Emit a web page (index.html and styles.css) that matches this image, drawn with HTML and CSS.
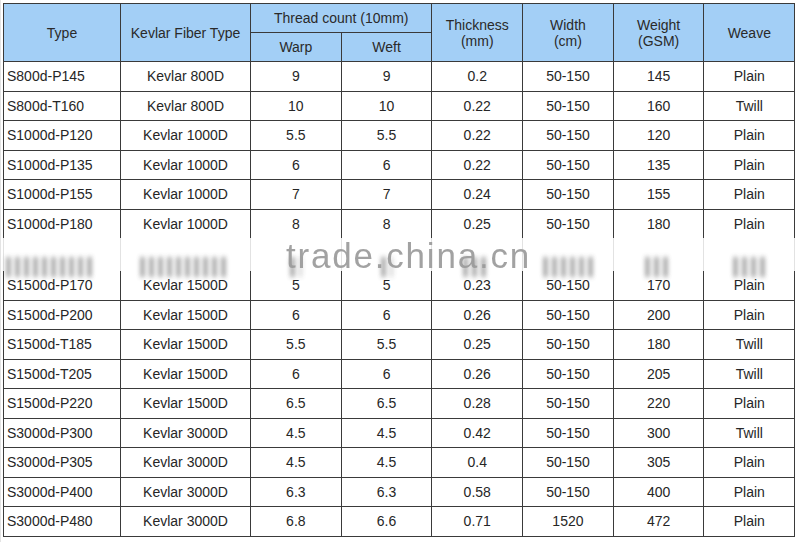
FILE: index.html
```html
<!DOCTYPE html>
<html>
<head>
<meta charset="utf-8">
<link rel="stylesheet" href="styles.css">
</head>
<body>
<div class="sheet">
  <table class="spec">
    <colgroup>
      <col class="c-type"><col class="c-fiber"><col class="c-n"><col class="c-n"><col class="c-n"><col class="c-n"><col class="c-n"><col class="c-n">
    </colgroup>
    <thead>
      <tr class="h1">
        <th rowspan="2">Type</th>
        <th rowspan="2">Kevlar Fiber Type</th>
        <th colspan="2">Thread count (10mm)</th>
        <th rowspan="2">Thickness<br>(mm)</th>
        <th rowspan="2">Width<br>(cm)</th>
        <th rowspan="2">Weight<br>(GSM)</th>
        <th rowspan="2">Weave</th>
      </tr>
      <tr class="h2">
        <th>Warp</th>
        <th>Weft</th>
      </tr>
    </thead>
    <tbody>
      <tr><td>S800d-P145</td><td>Kevlar 800D</td><td>9</td><td>9</td><td>0.2</td><td>50-150</td><td>145</td><td>Plain</td></tr>
      <tr><td>S800d-T160</td><td>Kevlar 800D</td><td>10</td><td>10</td><td>0.22</td><td>50-150</td><td>160</td><td>Twill</td></tr>
      <tr><td>S1000d-P120</td><td>Kevlar 1000D</td><td>5.5</td><td>5.5</td><td>0.22</td><td>50-150</td><td>120</td><td>Plain</td></tr>
      <tr><td>S1000d-P135</td><td>Kevlar 1000D</td><td>6</td><td>6</td><td>0.22</td><td>50-150</td><td>135</td><td>Plain</td></tr>
      <tr><td>S1000d-P155</td><td>Kevlar 1000D</td><td>7</td><td>7</td><td>0.24</td><td>50-150</td><td>155</td><td>Plain</td></tr>
      <tr class="open-bottom"><td>S1000d-P180</td><td>Kevlar 1000D</td><td>8</td><td>8</td><td>0.25</td><td>50-150</td><td>180</td><td>Plain</td></tr>
      <tr class="blurred">
        <td><i class="smear w86"></i></td>
        <td><i class="smear w90"></i></td>
        <td><i class="smear w12"></i></td>
        <td><i class="smear w12"></i></td>
        <td><i class="smear w26"></i></td>
        <td><i class="smear w48"></i></td>
        <td><i class="smear w26"></i></td>
        <td><i class="smear w30"></i></td>
      </tr>
      <tr class="open-top"><td>S1500d-P170</td><td>Kevlar 1500D</td><td>5</td><td>5</td><td>0.23</td><td>50-150</td><td>170</td><td>Plain</td></tr>
      <tr><td>S1500d-P200</td><td>Kevlar 1500D</td><td>6</td><td>6</td><td>0.26</td><td>50-150</td><td>200</td><td>Plain</td></tr>
      <tr><td>S1500d-T185</td><td>Kevlar 1500D</td><td>5.5</td><td>5.5</td><td>0.25</td><td>50-150</td><td>180</td><td>Twill</td></tr>
      <tr><td>S1500d-T205</td><td>Kevlar 1500D</td><td>6</td><td>6</td><td>0.26</td><td>50-150</td><td>205</td><td>Twill</td></tr>
      <tr><td>S1500d-P220</td><td>Kevlar 1500D</td><td>6.5</td><td>6.5</td><td>0.28</td><td>50-150</td><td>220</td><td>Plain</td></tr>
      <tr><td>S3000d-P300</td><td>Kevlar 3000D</td><td>4.5</td><td>4.5</td><td>0.42</td><td>50-150</td><td>300</td><td>Twill</td></tr>
      <tr><td>S3000d-P305</td><td>Kevlar 3000D</td><td>4.5</td><td>4.5</td><td>0.4</td><td>50-150</td><td>305</td><td>Plain</td></tr>
      <tr><td>S3000d-P400</td><td>Kevlar 3000D</td><td>6.3</td><td>6.3</td><td>0.58</td><td>50-150</td><td>400</td><td>Plain</td></tr>
      <tr><td>S3000d-P480</td><td>Kevlar 3000D</td><td>6.8</td><td>6.6</td><td>0.71</td><td>1520</td><td>472</td><td>Plain</td></tr>
    </tbody>
  </table>
  <div class="watermark">trade.china.cn</div>
</div>
</body>
</html>
```

FILE: styles.css
```css
html, body {
  margin: 0;
  padding: 0;
  background: #ffffff;
}

body {
  width: 800px;
  height: 542px;
  overflow: hidden;
  font-family: "Liberation Sans", Arial, sans-serif;
  color: #262626;
}

.sheet {
  position: relative;
  width: 800px;
  height: 542px;
  padding: 3px 0 0 3px;
  box-sizing: border-box;
  border-left: 1px solid #e4e4e4;
}

.spec {
  border-collapse: collapse;
  table-layout: fixed;
  width: 792px;
  margin-left: -1px;
  font-size: 14px;
}

.c-type { width: 117px; }
.c-fiber { width: 130px; }
.c-n { width: 90.7px; }

.spec th,
.spec td {
  border: 1px solid #3a3a3a;
  padding: 0;
  text-align: center;
  vertical-align: middle;
  line-height: 16px;
}

.spec th {
  background: #a3cff6;
  font-weight: normal;
  color: #2a2a2a;
}

.spec tr.h1 th,
.spec tr.h2 th {
  height: 28px;
}

.spec td {
  height: 28.5px;
}

.spec td:first-child {
  text-align: left;
  padding-left: 3px;
}

.spec tr.open-bottom td {
  border-bottom: none;
}

.spec tr.open-top td {
  border-top: none;
}

.spec tr.blurred td {
  height: 33px;
  border-top: none;
  border-bottom: none;
  border-left-color: #e2e2e2;
  border-right-color: #e2e2e2;
  vertical-align: bottom;
  line-height: 0;
}

.smear {
  display: inline-block;
  height: 20px;
  margin-bottom: -6px;
  background: repeating-linear-gradient(90deg, #3c3c3c 0 3px, transparent 3px 9px);
  filter: blur(2.6px);
  opacity: 0.7;
}

.w12 { width: 10px; }
.w26 { width: 26px; }
.w30 { width: 30px; }
.w48 { width: 48px; }
.w86 { width: 86px; }
.w90 { width: 90px; }

.watermark {
  position: absolute;
  left: 285px;
  top: 236px;
  font-family: "Liberation Sans", Arial, sans-serif;
  font-size: 35px;
  letter-spacing: 1.8px;
  color: #999999;
  opacity: 0.9;
  line-height: 40px;
  pointer-events: none;
}
```
